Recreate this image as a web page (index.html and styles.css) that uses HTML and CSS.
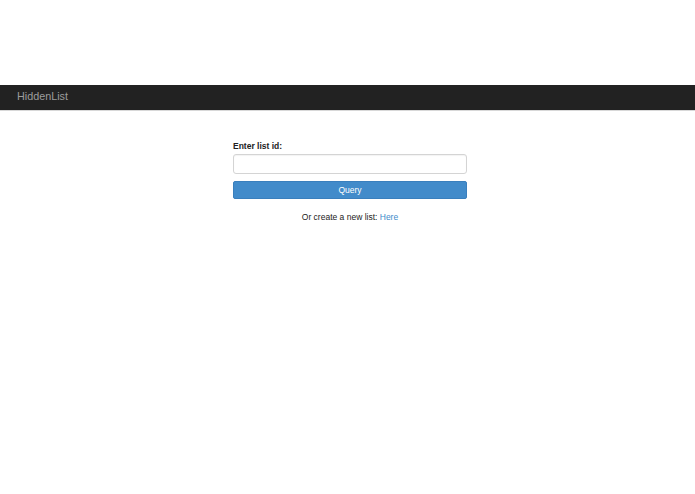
FILE: index.html
```html
<!DOCTYPE html>
<html>
<head>
<meta charset="utf-8">
<link rel="stylesheet" href="styles.css">
</head>
<body>
<div class="top-space"></div>
<nav class="navbar"><span class="brand">HiddenList</span></nav>
<main class="content">
  <form class="query-form">
    <label class="label" for="listid">Enter list id:</label>
    <input class="input" id="listid" type="text">
    <button class="btn" type="button">Query</button>
    <p class="create">Or create a new list: <a class="link" href="#">Here</a></p>
  </form>
</main>
</body>
</html>
```
FILE: styles.css
```css
html, body {
  margin: 0;
  padding: 0;
  background: #fff;
  font-family: "Liberation Sans", Arial, sans-serif;
  color: #333;
}
.top-space {
  height: 85px;
}
.navbar {
  height: 25px;
  background: #222;
  border-bottom: 1px solid #d8d8d8;
  display: flex;
  align-items: center;
  padding-left: 17px;
}
.brand {
  color: #9d9d9d;
  font-size: 10.8px;
  line-height: 1;
  position: relative;
  top: -1px;
}
.content {
  display: flex;
  justify-content: center;
  padding-top: 30px;
  padding-left: 5px;
}
.query-form {
  width: 234px;
  display: flex;
  flex-direction: column;
}
.label {
  font-size: 8.5px;
  font-weight: bold;
  color: #222;
  line-height: 10px;
  margin-bottom: 3px;
}
.input {
  box-sizing: border-box;
  height: 20px;
  width: 234px;
  margin: 0;
  border: 1px solid #d4d4d4;
  border-radius: 3px;
  background: #fff;
  box-shadow: inset 0 1px 1px rgba(0,0,0,0.05);
}
.btn {
  box-sizing: border-box;
  margin-top: 7px;
  height: 18px;
  width: 234px;
  border: 1px solid #3a7fbd;
  border-radius: 2px;
  background: #428bca;
  color: #fff;
  font-family: "Liberation Sans", Arial, sans-serif;
  font-size: 8.5px;
  padding: 0;
}
.create {
  margin: 13px 0 0;
  text-align: center;
  font-size: 8.5px;
  line-height: 10px;
  color: #222;
}
.link {
  color: #428bca;
  text-decoration: none;
}
```
